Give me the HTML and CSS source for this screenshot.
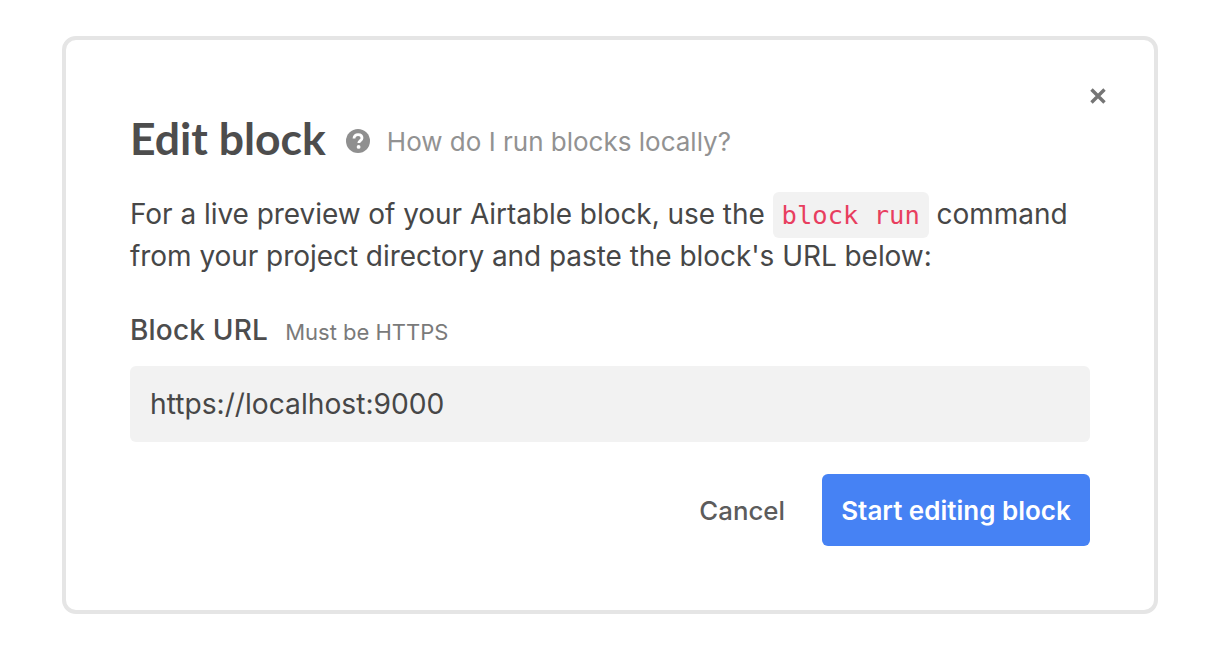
FILE: index.html
```html
<!DOCTYPE html>
<html lang="en">
<head>
<meta charset="utf-8">
<title>Edit block</title>
<link rel="stylesheet" href="styles.css">
</head>
<body>
<div class="dialog">
  <button class="close" aria-label="Close">
    <svg width="16" height="16" viewBox="0 0 16 16"><path d="M1.5 1.5L14.5 14.5M14.5 1.5L1.5 14.5" fill="none" stroke="#757575" stroke-width="3.4"/></svg>
  </button>
  <div class="head">
    <h1 class="title">Edit block</h1>
    <svg class="help" width="24" height="24" viewBox="0 0 24 24"><circle cx="12" cy="12" r="12" fill="#8f8f8f"/><path d="M8 9.4C8 7 9.8 5.6 12.1 5.6C14.4 5.6 16 7 16 9C16 11.6 12.8 11.6 12.8 14" fill="none" stroke="#fff" stroke-width="2.8"/><circle cx="12.6" cy="17.9" r="1.9" fill="#fff"/></svg>
    <a class="help-link">How do I run blocks locally?</a>
  </div>
  <p class="desc">For a live preview of your Airtable block, use the <code class="cmd">block run</code> command<br>from your project directory and paste the block's URL below:</p>
  <div class="label-row">
    <span class="label">Block URL</span>
    <span class="hint">Must be HTTPS</span>
  </div>
  <div class="input">https://localhost:9000</div>
  <div class="actions">
    <span class="cancel">Cancel</span>
    <button class="primary">Start editing block</button>
  </div>
</div>
</body>
</html>
```
FILE: styles.css
```css
* { box-sizing: border-box; }
html, body { margin: 0; background: #fff; }
body { padding: 36px 66px 34px 62px; font-family: Inter, "Liberation Sans", sans-serif; color: #444; }
.dialog {
  position: relative;
  width: 1096px;
  height: 578px;
  border: 4px solid #e5e5e5;
  border-radius: 14px;
  padding: 70px 64px 0;
  background: #fff;
}
.close { position: absolute; top: 48px; right: 48px; width: 16px; height: 16px; padding: 0; border: 0; background: none; display: block; }
.close svg { display: block; }
.head { display: flex; align-items: center; height: 60px; }
.title { margin: 0 0 4px; font: 700 44.5px/60px Lato, sans-serif; color: #4d4d4d; }
.help { margin-left: 20px; flex: none; position: relative; top: 1px; }
.help-link { margin-left: 17px; font-size: 26px; color: #929292; position: relative; top: 1px; }
.desc { margin: 23px 0 0; font-size: 28px; line-height: 42px; letter-spacing: -0.05px; color: #474747; }
.cmd {
  font: 25.5px/1 "DejaVu Sans Mono", monospace;
  letter-spacing: 0;
  padding: 8px 9px;
  background: #f2f2f2;
  border-radius: 6px;
  color: #e83e5f;
}
.label-row { display: flex; align-items: baseline; margin-top: 33px; }
.label { font-size: 28px; font-weight: 500; line-height: 40px; letter-spacing: 0.2px; color: #4d4d4d; }
.hint { margin-left: 17px; font-size: 22px; color: #7a7a7a; }
.input {
  margin-top: 16px;
  height: 76px;
  padding: 0 20px;
  background: #f2f2f2;
  border-radius: 6px;
  font-size: 28.2px;
  line-height: 76px;
  color: #474747;
}
.actions { display: flex; justify-content: flex-end; align-items: center; margin-top: 32px; }
.cancel { font-size: 25.8px; font-weight: 500; color: #5c5c5c; margin-right: 37px; }
.primary {
  width: 268px;
  height: 72px;
  padding: 0;
  border: 0;
  border-radius: 6px;
  background: #4682f4;
  color: #fff;
  font: 600 26px Inter, sans-serif;
}
```
